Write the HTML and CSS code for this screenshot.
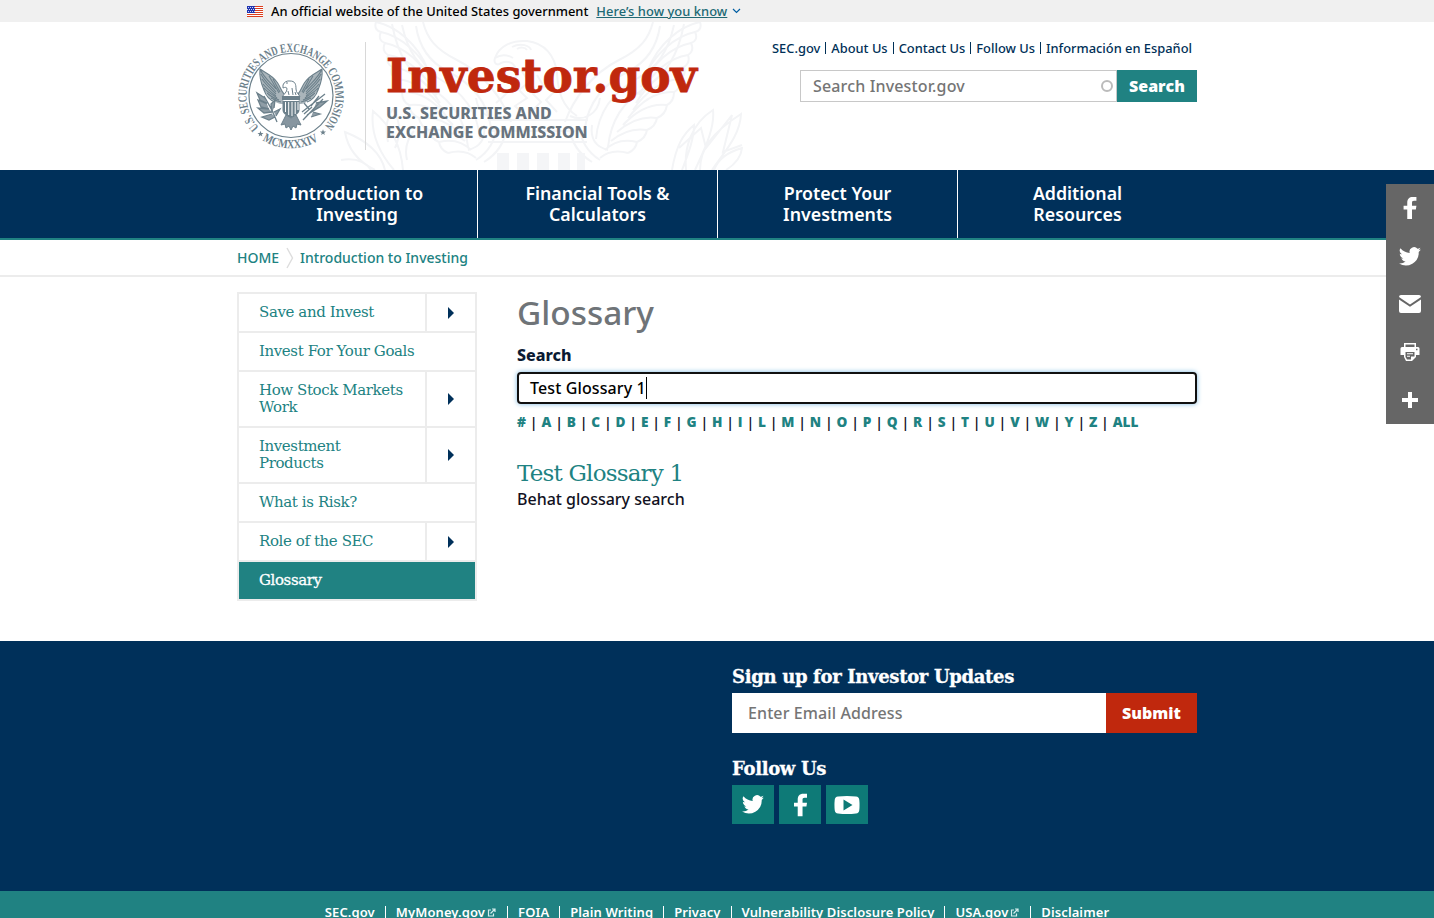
FILE: index.html
```html
<!DOCTYPE html>
<html lang="en">
<head>
<meta charset="utf-8">
<title>Glossary | Investor.gov</title>
<link rel="stylesheet" href="styles.css">
</head>
<body>
<svg class="defs" width="0" height="0" aria-hidden="true">
  <symbol id="tw" viewBox="0 0 24 20"><path d="M24 2.4a10 10 0 0 1-2.8.8A4.900 4.900 0 0 0 23.300.4a10 10 0 0 1-3.100 1.200A4.900 4.900 0 0 0 11.700 6.100 14 14 0 0 1 1.600 1a4.900 4.900 0 0 0 1.500 6.600 5 5 0 0 1-2.200-.6c0 2.300 1.600 4.400 3.900 4.900a5 5 0 0 1-2.200.1 4.900 4.900 0 0 0 4.600 3.400A10 10 0 0 1 0 17.500 14 14 0 0 0 21.500 5z"/></symbol>
  <symbol id="fb" viewBox="0 0 14 24"><path d="M4 24V13.500H0V9.500h4V6.200C4 2.200 6.300 0 9.900 0H14v4.200h-2.600C9.700 4.200 9.200 5 9.200 6.300v3.200H14l-.6 4H9.200V24z"/></symbol>
  <symbol id="ext" viewBox="0 0 9 9"><path d="M4 2H1.500v6h5V5.500M3.500 5.500 7.500 1.500M5 1h3v3" fill="none" stroke="#d5eeee" stroke-width="1.200"/></symbol>
</svg>

<div class="banner"><div class="banner-in">
  <svg class="flag" width="16" height="11" viewBox="0 0 16 11"><path fill="#fff" d="M0 0h16v11H0z"/><path stroke="#db3e1f" stroke-width="1" d="M0 .5h16M0 2.500h16M0 4.500h16M0 6.500h16M0 8.500h16M0 10.500h16"/><path fill="#1e33b1" d="M0 0h8v7H0z"/><path stroke="#fff" stroke-dasharray="1 1" stroke-width=".8" d="M1 1.500h7M0 3.500h7M1 5.500h7"/></svg>
  <span class="official">An official website of the United States government</span>
  <a class="how">Here’s how you know</a>
  <svg width="9" height="6" viewBox="0 0 9 6"><path d="M1 1l3.500 3.500L8 1" fill="none" stroke="#005ea2" stroke-width="1.200"/></svg>
</div></div>

<header class="header">
  <svg class="watermark" width="410" height="148" viewBox="338 22 410 148">
    <g fill="none" stroke="#f3f4f6" stroke-width="2">
      <path d="M495 58c4-12 17-18 32-17 18 2 28 15 30 32 1 20 6 34 20 43M495 58c6-4 13-3 18 0M495 58c-2 6 3 8 6 5 8-3 13 0 15 6 4 12-8 24-20 34M512 47c9-5 18-1 19 3M517 49c3-2 8-2 10 1M521 70l8 12-10 8 8 8-12 8 9 8M537 75l7 12-11 7 8 8-10 10M551 82l3 10-8 8 11 12"/>
      <path d="M488 120h100M490 131h96M488 142h99"/>
      <g id="wm-wing">
        <path d="M565 122c8-22 26-48 54-62 22-11 30-22 34-38M570 116c14 6 28-2 30-18"/>
        <path d="M700 22c-20 4-42 22-52 48M695 32c-20 4-40 22-52 46M691 43c-20 4-38 20-50 44M688 55c-19 3-36 18-49 40M684 67c-18 2-35 15-48 36M680 79c-17 1-34 12-47 31M674 92c-16-1-32 8-46 26M667 105c-16-2-30 5-44 20M657 118c-13-2-26 2-40 14M647 130c-12-2-24 1-36 11M637 142c-12-3-23-1-32 8M628 153c-11-3-20-2-28 5M700 22c2 6-1 9-5 10 3 6 0 10-4 11 3 6 0 10-3 12 2 6-1 10-4 12 2 6-1 10-4 12 1 7-2 11-6 13 0 7-3 11-7 13-1 7-5 11-10 13-1 6-5 10-10 12-1 6-5 10-10 12-1 6-4 9-9 11"/>
        <path d="M660 26c-3 20-12 35-31 45-26 13-41 33-44 57M674 25c-6 28-18 44-36 53-25 14-40 35-42 61M684 24c-6 32-18 50-39 64-22 14-34 32-37 59M570 130c2 14 9 24 22 32M580 127c0 12 7 25 20 33M592 125c-2 14 4 22 16 25"/>
      </g>
      <use href="#wm-wing" transform="matrix(-1 0 0 1 1076 0)"/>
      <path d="M672 170c4-24 11-36 22-45 0 13-5 27-12 45M686 170c-2-22 5-46 27-60 2 18-8 38-18 60M700 170c0-22 13-38 41-56-1 22-17 38-29 56M714 170c4-11 14-18 28-22-1 10-8 17-16 22M679 148l22-20 5 20 26-33-9 37 19-7M403 170c-2-25-12-44-30-59-3 24 9 45 21 59M385 170c-4-17-17-29-40-38 3 18 14 30 30 38M371 170c-6-9-17-12-30-10M388 142c-3-14-2-24 5-33 9 15 7 28 2 39M407 160c-3-13 1-22 7-29"/>
    </g>
    <path fill="#f4f5f7" d="M497 153h12v17h-12zM517 153h12v17h-12zM537 153h12v17h-12zM558 153h12v17h-12zM577 153h8v17h-8z"/>
  </svg>
  <div class="wrap head-in">
    <svg class="seal" width="108" height="108" viewBox="237 42 108 108">
      <defs>
        <path id="arc-top" d="M259 127.300A44.500 44.500 0 1 1 323 127.300"/>
        <path id="arc-bot" d="M262.500 140A53 53 0 0 0 319.500 140"/>
        <path id="star" d="M0-3.200.8-1H3L1.200.4 1.900 2.600 0 1.300-1.900 2.600-1.200.4-3-1H-.8z"/>
      </defs>
      <g class="seal-text"><text><textPath href="#arc-top" textLength="206" lengthAdjust="spacingAndGlyphs">U.S. SECURITIES AND EXCHANGE COMMISSION</textPath></text>
      <text><textPath href="#arc-bot" textLength="59" lengthAdjust="spacingAndGlyphs">MCMXXXIV</textPath></text></g>
      <circle cx="291" cy="95.500" r="42" fill="none" stroke="#6c808b" stroke-width="1.200"/>
      <g fill="#6c808b"><use href="#star" x="260.500" y="134"/><use href="#star" x="323" y="132.500"/></g>
      <g id="seal-wing">
        <path d="M260 69c4 3 12 6 17 13 3 4 4 9 7 12l-1 10c-5 0-8-2-9-4-4-1-6-3-7-6-3-2-4-5-4-8-2-4-3-11-3-17z" fill="#aab5bb"/>
        <path d="M260 69c4 3 12 6 17 13 3 4 4 9 7 12M260 69c4 9 10 13 16 20M261 74c4 8 10 12 15 18M262 79c4 6 9 10 14 15M263 84c4 5 8 8 13 12M264 88c3 4 8 6 13 10M267 93c3 3 7 5 12 7M271 98c3 2 6 3 10 4M260 69c-1 10 2 16 4 21 2 6 6 10 11 12M273 79l7 13M269 76l10 17" fill="none" stroke="#6c808b" stroke-width="1.100"/>
      </g>
      <use href="#seal-wing" transform="matrix(-1 0 0 1 582 0)"/>
      <path d="M283 85c1-3 4-4.500 7-4 5 0 6 3 6 8 0 4 3 5 4 8H282c2-3 5-5 5-8 0-2-2-2-4-1z" fill="#fff" stroke="#6c808b"/>
      <path d="M286 83h2M288 91l1 4M292 88l1 7M295 92l1 3" stroke="#6c808b"/>
      <path d="M282 96h18v4h-18zM282.500 101v9c0 4 4 5 8.500 8 4-3 8.500-4 8.500-8v-9z" fill="#6c808b"/>
      <path d="M285.500 102v10M288.700 102v13M292 102v14M295.200 102v12M298 102v8" stroke="#fff" stroke-width="1"/>
      <path d="M286 115l-5 10 4-1 1 4 3-2 2 4 2-4 3 2 1-4 4 1-5-10-5 3z" fill="#8796a0" stroke="#6c808b"/>
      <path d="M277 122l-5-12-8-14M269 109l-11-1 6 5 8-1M272 114l-10 3 7 3 6-3M267 104l-9-4 3 7 8 2M265 98l-8-5 3 7 7 3M274 108l1-8-4 4 1 8M276 116l4-7-6 3M303 120l20-21M302 112l23-18M304 114l8-7M307 115l12-8M309 109l-5-6M311 106l8-10M316 103l11-2-7 6-7 4M313 112l7 2-9 3" fill="#8f9da6" stroke="#6c808b" stroke-width="1.300"/>
    </svg>
    <div class="brand">
      <svg class="wordmark" width="314" height="56" viewBox="0 0 314 56"><text x="0" y="42" textLength="311" lengthAdjust="spacingAndGlyphs">Investor.gov</text></svg>
      <div class="agency">U.S. SECURITIES AND<br>EXCHANGE COMMISSION</div>
    </div>
    <div class="head-right">
      <ul class="utility"><li>SEC.gov</li><li>About Us</li><li>Contact Us</li><li>Follow Us</li><li>Información en Español</li></ul>
      <form class="site-search"><div class="field"><span>Search Investor.gov</span><i class="ring"></i></div><button type="button">Search</button></form>
    </div>
  </div>
</header>

<nav class="nav"><ul class="wrap">
  <li>Introduction to<br>Investing</li><li>Financial Tools &amp;<br>Calculators</li><li>Protect Your<br>Investments</li><li>Additional<br>Resources</li>
</ul></nav>

<div class="crumbs"><div class="wrap"><span class="c1">HOME</span><svg width="8" height="22" viewBox="0 0 8 22"><path d="M1 1l5.500 10L1 21" fill="none" stroke="#ddd" stroke-width="1.400"/></svg><span class="c2">Introduction to Investing</span></div></div>

<div class="wrap page">
  <ul class="side">
    <li><a>Save and Invest</a><i></i></li>
    <li><a>Invest For Your Goals</a></li>
    <li><a>How Stock Markets<br>Work</a><i></i></li>
    <li><a>Investment<br>Products</a><i></i></li>
    <li><a>What is Risk?</a></li>
    <li><a>Role of the SEC</a><i></i></li>
    <li class="on"><a>Glossary</a></li>
  </ul>
  <main class="main">
    <h1>Glossary</h1>
    <label>Search</label>
    <div class="input"><span>Test Glossary 1</span></div>
    <div class="letters"><a>#</a><b>|</b><a>A</a><b>|</b><a>B</a><b>|</b><a>C</a><b>|</b><a>D</a><b>|</b><a>E</a><b>|</b><a>F</a><b>|</b><a>G</a><b>|</b><a>H</a><b>|</b><a>I</a><b>|</b><a>L</a><b>|</b><a>M</a><b>|</b><a>N</a><b>|</b><a>O</a><b>|</b><a>P</a><b>|</b><a>Q</a><b>|</b><a>R</a><b>|</b><a>S</a><b>|</b><a>T</a><b>|</b><a>U</a><b>|</b><a>V</a><b>|</b><a>W</a><b>|</b><a>Y</a><b>|</b><a>Z</a><b>|</b><a>ALL</a></div>
    <h2>Test Glossary 1</h2>
    <p>Behat glossary search</p>
  </main>
</div>

<footer>
  <div class="foot"><div class="wrap"><div class="foot-col">
    <h3 class="signup">Sign up for Investor Updates</h3>
    <form class="email"><div>Enter Email Address</div><button type="button">Submit</button></form>
    <h3 class="follow">Follow Us</h3>
    <div class="social">
      <a><svg width="22" height="19"><use href="#tw"/></svg></a>
      <a><svg width="13" height="24"><use href="#fb"/></svg></a>
      <a><svg width="26" height="18" viewBox="0 0 26 18"><path fill-rule="evenodd" d="M4 .5Q13-.5 22 .5 25 .8 25.300 4q.5 5 0 10-.3 3.200-3.300 3.500-9 1-18 0Q1 17.200.7 14q-.5-5 0-10Q1 .8 4 .5zM9.500 3.500v11l9-5.500z"/></svg></a>
    </div>
  </div></div></div>
  <ul class="legal"><li>SEC.gov</li><li>MyMoney.gov<svg width="9" height="9"><use href="#ext"/></svg></li><li>FOIA</li><li>Plain Writing</li><li>Privacy</li><li>Vulnerability Disclosure Policy</li><li>USA.gov<svg width="9" height="9"><use href="#ext"/></svg></li><li>Disclaimer</li></ul>
</footer>

<aside class="share">
  <a><svg width="14" height="22"><use href="#fb"/></svg></a>
  <a><svg width="22" height="19"><use href="#tw"/></svg></a>
  <a><svg width="22" height="18" viewBox="0 0 22 18"><path d="M2 0h18q2 0 2 2L11 9.500 0 2Q0 0 2 0zM0 4.500l11 7.300 11-7.300V16q0 2-2 2H2q-2 0-2-2z"/></svg></a>
  <a><svg width="20" height="18" viewBox="0 0 20 18"><path fill-rule="evenodd" d="M4 0h12v4h2q1.500 0 1.500 1.500V12H16v2l-4 4H6l-2-4v-2H.5V5.500Q.5 4 2 4h2zM5.500 1.500V4h9V1.500zM5.500 9v5l1.500 2.500h4V13.500h3.500V9zM7 10.300h6v1H7zM7 12.800h3v1H7zM16 5.800v1.500h1.500V5.800z"/></svg></a>
  <a><svg width="16" height="16" viewBox="0 0 16 16"><path d="M6 0h4v6h6v4h-6v6H6v-6H0V6h6z"/></svg></a>
</aside>
</body>
</html>
```
FILE: styles.css
```css
* { box-sizing: border-box; }
html, body { height: 918px; overflow: hidden; }
body { margin: 0; font-family: "Noto Sans", "Open Sans", sans-serif; font-size: 16px; font-weight: 500; color: #112; background: #fff; }
ul { list-style: none; margin: 0; padding: 0; }
h1, h2, h3, p { margin: 0; }
button { border: 0; padding: 0; font: 800 16px/32px "Open Sans", sans-serif; color: #fff; }
svg { display: block; flex: none; }
.defs { position: absolute; }
.wrap { width: 960px; margin: 0 auto; }

.banner { background: #f0f0f0; height: 22px; }
.banner-in { width: 940px; margin: 0 auto; display: flex; align-items: center; height: 22px; font-size: 12.900px; white-space: nowrap; color: #000; }
.official { margin: 0 8px; }
.how { color: #216974; text-decoration: underline; margin-right: 5px; letter-spacing: .05px; }

.header { position: relative; height: 148px; }
.watermark { position: absolute; left: 338px; top: 0; }
.head-in { position: relative; display: flex; align-items: flex-start; padding-top: 20px; }
.seal-text { font: bold 12.500px "Liberation Serif", serif; fill: #6c808b; }
.seal { overflow: visible; }
.brand { margin-left: 20px; border-left: 1px solid #d8d8d8; padding-left: 20px; height: 108px; flex: 1; }
.wordmark { margin-top: 8px; overflow: visible; }
.wordmark text { font: bold 47px "DejaVu Serif", serif; fill: #c0280d; stroke: #c0280d; stroke-width: .8px; }
.agency { margin-top: -2px; font-weight: 800; font-size: 16px; line-height: 19px; color: #68737d; white-space: nowrap; }
.head-right { width: 430px; display: flex; flex-direction: column; align-items: flex-end; }
.utility { display: flex; align-items: center; height: 12px; font-size: 12.870px; line-height: 12px; color: #003057; white-space: nowrap; padding-right: 5px; }
.utility li + li { border-left: 1px solid #003057; margin-left: 5px; padding-left: 5px; }
.site-search { display: flex; margin-top: 16px; height: 32px; }
.field { width: 317px; border: 1px solid #c8c8c8; display: flex; align-items: center; justify-content: space-between; padding: 0 3px 0 12px; color: #757575; background: #fff; letter-spacing: .15px; }
.ring { width: 12px; height: 12px; border: 2px solid #bbb; border-radius: 50%; }
.site-search button { width: 80px; background: #208282; }

.nav { background: #00305a; height: 70px; border-bottom: 2px solid #208282; }
.nav ul { display: flex; }
.nav li { width: 240px; height: 68px; padding-top: 13px; text-align: center; color: #fff; font-weight: 600; font-size: 17.800px; line-height: 21px; }
.nav li + li { border-left: 1px solid #fff; }
.crumbs { height: 37px; border-bottom: 2px solid #ececec; }
.crumbs .wrap { display: flex; align-items: center; height: 35px; color: #208282; font-size: 14px; }
.crumbs svg { margin: 0 6px 0 7px; }

.page { display: flex; height: 364px; padding-top: 15px; align-items: flex-start; }
.side { width: 240px; border: 2px solid #ececec; font: 15px/17px "DejaVu Serif", serif; color: #208282; }
.side li { display: flex; border-bottom: 2px solid #ececec; }
.side li:last-child { border-bottom: 0; }
.side a { flex: 1; padding: 10px 0 10px 20px; white-space: nowrap; letter-spacing: -.4px; }
.side i { width: 50px; border-left: 2px solid #ececec; display: flex; align-items: center; justify-content: center; }
.side i::before { content: ""; border-left: 6px solid #00305a; border-top: 6px solid transparent; border-bottom: 6px solid transparent; }
.side .on { background: #208282; color: #fff; }
.side .on a { -webkit-text-stroke: .3px #fff; }

.main { width: 680px; margin-left: 40px; }
h1 { font-size: 33.400px; line-height: 40px; font-weight: 500; color: #6f7478; }
label { display: block; font-weight: 800; line-height: 22px; margin-top: 12px; color: #0b1a33; }
.input { height: 32px; margin-top: 6px; border: 2px solid #101010; border-radius: 4px; box-shadow: 0 0 5px #79b7e0; padding-left: 11px; display: flex; align-items: center; color: #000; letter-spacing: .12px; }
.input span { border-right: 1px solid #000; line-height: 22px; }
.letters { display: flex; align-items: center; justify-content: space-between; width: 622px; height: 18px; margin-top: 9px; font: 800 13.600px/18px "Open Sans", sans-serif; color: #208282; }
.letters b { font-weight: 600; font-size: 15px; color: #112; width: 4px; display: flex; justify-content: center; }
h2 { font: 23px/28px "DejaVu Serif", serif; letter-spacing: -.8px; color: #208282; margin-top: 28px; }
p { line-height: 24px; }

.foot { height: 250px; background: #00305a; padding-top: 25px; }
.foot-col { margin-left: 495px; }
h3 { font: bold 18px/22px "DejaVu Serif", serif; color: #fff; letter-spacing: -.33px; white-space: nowrap; -webkit-text-stroke: .3px #fff; }
.email { display: flex; margin-top: 5px; height: 40px; }
.email div { width: 374px; background: #fff; color: #757575; line-height: 40px; padding-left: 16px; letter-spacing: .1px; }
.email button { width: 91px; background: #c0280d; }
.follow { margin-top: 25px; }
.social { display: flex; gap: 5px; margin-top: 5px; fill: #fff; }
.social a { width: 42px; height: 39px; background: #0e7a77; display: flex; align-items: center; justify-content: center; }
.legal { background: #208282; height: 27px; padding-top: 15px; display: flex; justify-content: center; color: #fff; font-size: 13px; font-weight: 600; line-height: 13px; white-space: nowrap; letter-spacing: .1px; }
.legal li { display: flex; align-items: center; height: 13px; }
.legal li + li { border-left: 1px solid #fff; margin-left: 10px; padding-left: 10px; }
.legal svg { margin: 0 1px 0 2px; }
.share { position: absolute; right: 0; top: 184px; width: 48px; height: 240px; background: #666; fill: #fff; }
.share a { height: 48px; display: flex; align-items: center; justify-content: center; }
```
